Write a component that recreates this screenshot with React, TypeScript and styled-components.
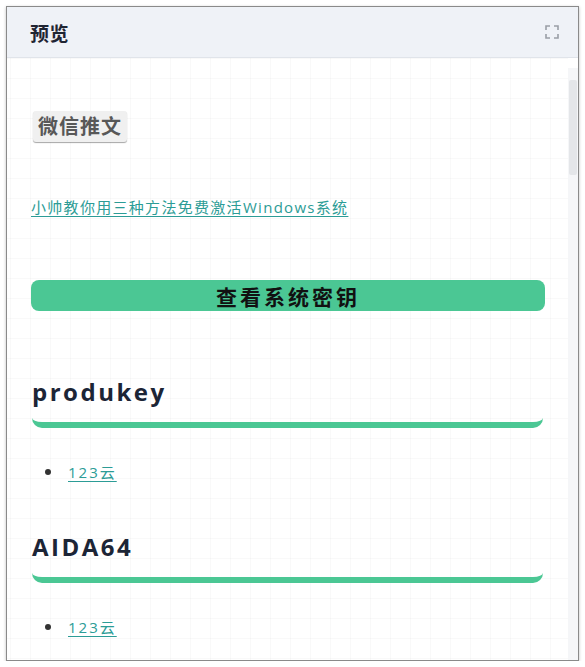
import React from "react";
import styled, { createGlobalStyle } from "styled-components";

const GlobalStyle = createGlobalStyle`
	html, body {
		margin: 0;
		padding: 0;
		background: #fff;
	}
	body {
		font-family: "Open Sans", "Noto Sans CJK SC", sans-serif;
	}
`;

const Page = styled.div`
	padding: 6px 6px 0 6px;
	width: 585px;
	box-sizing: border-box;
`;

const Frame = styled.div`
	width: 573px;
	height: 655px;
	box-sizing: border-box;
	border: 1px solid #8a8a8a;
	box-shadow: 0 1px 3px rgba(0, 0, 0, 0.25);
	display: flex;
	flex-direction: column;
	background: #fff;
	overflow: hidden;
`;

const Header = styled.div`
	height: 50px;
	flex: none;
	display: flex;
	align-items: center;
	justify-content: space-between;
	padding: 0 19px 0 23px;
	background: #eff2f7;
	border-bottom: 1px solid #e0e4ea;
	h3 {
		margin: 0;
		font-family: "Noto Sans CJK SC", sans-serif;
		font-size: 19px;
		font-weight: 700;
		letter-spacing: 0.5px;
		color: #1f2533;
	}
`;

const IconBtn = styled.span`
	display: flex;
	width: 14px;
	height: 14px;
	color: #9a9ea6;
`;

const Body = styled.div`
	flex: 1;
	min-height: 0;
	display: flex;
`;

const Scroller = styled.div`
	flex: 1;
	overflow: hidden;
	background-color: #fff;
	background-image: linear-gradient(rgba(0, 0, 0, 0.022) 1px, transparent 1px),
		linear-gradient(90deg, rgba(0, 0, 0, 0.022) 1px, transparent 1px);
	background-size: 20px 20px;
	background-position: 3px 0;
`;

const ScrollTrack = styled.div`
	width: 10px;
	flex: none;
	padding-top: 22px;
	box-sizing: border-box;
	background: linear-gradient(#fff 10px, #f5f6f8 10px);
`;

const ScrollThumb = styled.div`
	margin: 0 1px;
	height: 95px;
	border-radius: 2px;
	background: #e4e6e9;
`;

const Article = styled.div`
	padding: 53px 23px 40px 24px;
`;

const TagButton = styled.span`
	display: inline-block;
	margin-left: 2px;
	padding: 1px 5px 2px 5px;
	height: 31px;
	box-sizing: border-box;
	background: #f0f0f0;
	border-radius: 3px;
	box-shadow: 0 1px 1px rgba(0, 0, 0, 0.35);
	font-family: "Noto Sans CJK SC", sans-serif;
	font-size: 20px;
	line-height: 27px;
	font-weight: 700;
	letter-spacing: 1px;
	color: #585858;
`;

const Link = styled.a<{ $spacing?: number }>`
	color: #2c9c96;
	text-decoration: underline;
	text-underline-offset: 3px;
	font-size: 15px;
	letter-spacing: ${(p) => p.$spacing ?? 1.3}px;
	font-family: "Open Sans", "Noto Sans CJK SC", sans-serif;
`;

const LinkLine = styled.p`
	margin: 53px 0 0 0;
	line-height: 24px;
`;

const Banner = styled.div`
	margin-top: 61px;
	height: 31px;
	border-radius: 8px;
	background: #4bc794;
	display: flex;
	align-items: center;
	justify-content: center;
	font-family: "Noto Sans CJK SC", sans-serif;
	font-size: 21px;
	font-weight: 700;
	letter-spacing: 3px;
	color: #111;
`;

const Section = styled.section<{ $gap: number }>`
	margin-top: ${(p) => p.$gap}px;
`;

const Heading = styled.h2`
	margin: 0 2px 0 1px;
	padding: 0 0 14px 0;
	font-family: "Open Sans", sans-serif;
	font-size: 24px;
	line-height: 32px;
	font-weight: 700;
	letter-spacing: 2.5px;
	color: #1c2536;
	border-bottom: 6px solid #4bc794;
	border-radius: 0 0 10px 10px;
`;

const List = styled.ul`
	margin: 32px 0 0 0;
	padding-left: 14px;
	list-style: none;
	line-height: 24px;
`;

const Item = styled.li`
	display: flex;
	align-items: center;
	gap: 17px;
	&::before {
		content: "";
		width: 6px;
		height: 6px;
		border-radius: 50%;
		background: #333;
		margin-top: -1px;
	}
`;

function ExpandIcon() {
	return (
		<svg width="14" height="14" viewBox="0 0 14 14" fill="none">
			<path
				d="M1 5V1h4M9 1h4v4M13 9v4H9M5 13H1V9"
				stroke="currentColor"
				strokeWidth="1.6"
			/>
		</svg>
	);
}

const sections = [
	{ title: "produkey", gap: 65 },
	{ title: "AIDA64", gap: 47 },
];

export default function App() {
	return (
		<Page>
			<GlobalStyle />
			<Frame>
				<Header>
					<h3>预览</h3>
					<IconBtn>
						<ExpandIcon />
					</IconBtn>
				</Header>
				<Body>
					<Scroller>
						<Article>
							<TagButton>微信推文</TagButton>
							<LinkLine>
								<Link href="#">小帅教你用三种方法免费激活Windows系统</Link>
							</LinkLine>
							<Banner>查看系统密钥</Banner>
							{sections.map((s) => (
								<Section key={s.title} $gap={s.gap}>
									<Heading>{s.title}</Heading>
									<List>
										<Item>
											<Link href="#" $spacing={2}>
												123云
											</Link>
										</Item>
									</List>
								</Section>
							))}
						</Article>
					</Scroller>
					<ScrollTrack>
						<ScrollThumb />
					</ScrollTrack>
				</Body>
			</Frame>
		</Page>
	);
}
